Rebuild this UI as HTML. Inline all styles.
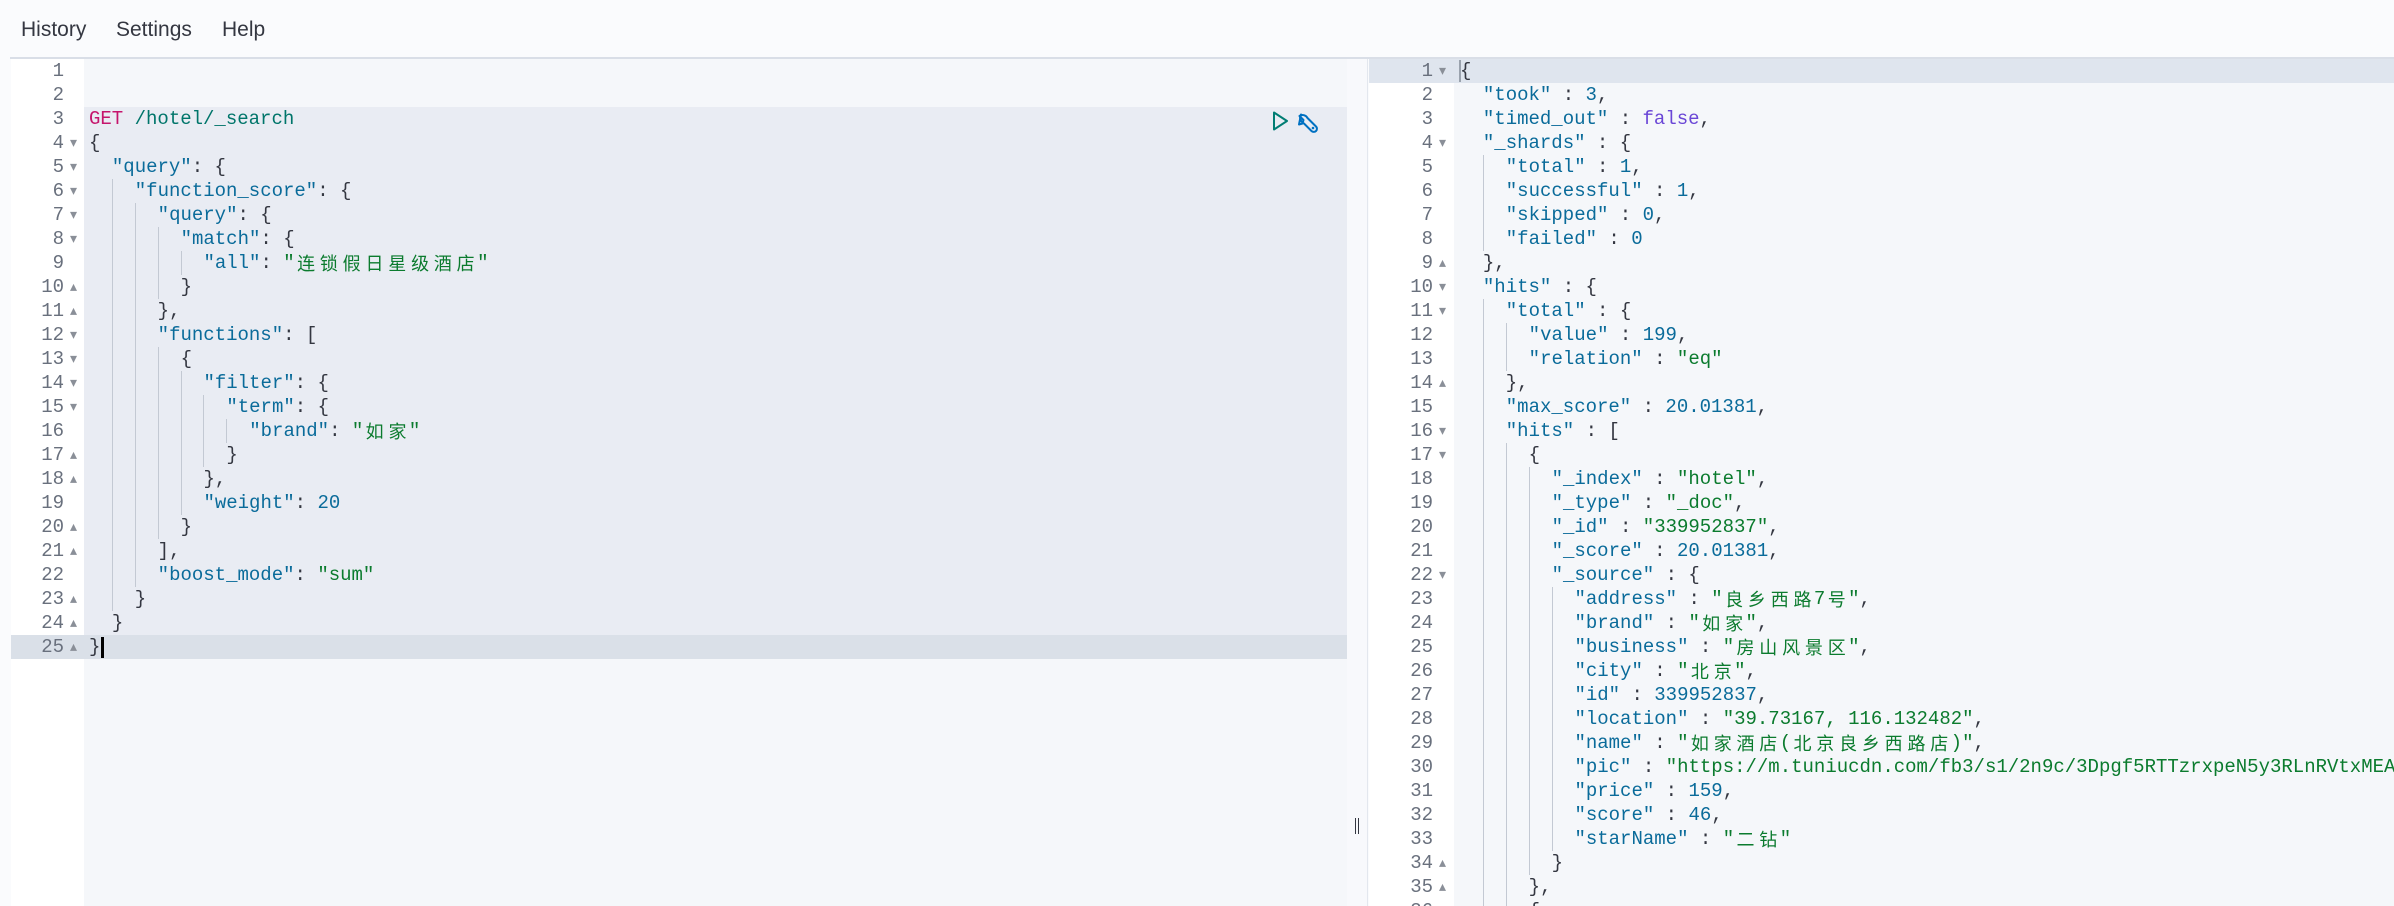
<!DOCTYPE html>
<html><head><meta charset="utf-8">
<style>
*{margin:0;padding:0;box-sizing:border-box}
body{width:2394px;height:906px;overflow:hidden;background:#fafbfd;font-family:"Liberation Sans",sans-serif;position:relative}
.menu{position:absolute;top:18px;font-size:21px;color:#343741}
.topline{position:absolute;left:10px;right:0;top:57px;height:2px;background:#d9dee7}
.pane{position:absolute;top:59px;bottom:0;overflow:hidden;font-family:"Liberation Mono","Noto Sans CJK SC",monospace;font-size:19px}
.gut{position:absolute;top:0;bottom:0;background:#fff}
.txt{position:absolute;top:0;bottom:0;background:#f5f7fa}
.ln{position:absolute;height:24px;line-height:24px;color:#69707d;text-align:right}
.fold{position:absolute;font-size:14px;color:#8a8f98;line-height:24px;height:24px;font-family:"DejaVu Sans",sans-serif}
.row{position:absolute;height:24px;line-height:24px;white-space:pre;color:#343741;overflow:hidden}
.g{display:inline-block;width:22.9px;height:24px;vertical-align:top}
.g.b{border-left:1px solid #c3c9d3}
.k{color:#0a6b9a}.s{color:#0b7b2e}.n{color:#0a6b9a}.b2{color:#6a46d6}
.cj{display:inline-block;width:22.8px;height:24px;line-height:24px;vertical-align:top;text-align:center;font-family:"Noto Sans CJK SC",sans-serif;font-size:18px;overflow:hidden}
</style></head><body>
<div class="menu" style="left:21px">History</div>
<div class="menu" style="left:116px">Settings</div>
<div class="menu" style="left:222px">Help</div>
<div class="topline"></div>

<div class="pane" id="L" style="left:11px;width:1336px">
 <div class="gut" style="left:0;width:73px"></div>
 <div class="txt" style="left:73px;right:0"></div>
 <div style="position:absolute;left:73px;right:0;top:48px;height:528px;background:#e9ecf3"></div>
 <div style="position:absolute;left:0;right:0;top:576px;height:24px;background:#dae0e8"></div>
 <div style="position:absolute;left:90px;top:578px;width:3px;height:21px;background:#000"></div>
 <svg style="position:absolute;left:1260px;top:51px" width="70" height="24" viewBox="0 0 70 24">
  <path d="M3 2.5 L16 11 L3 19.5 Z" fill="none" stroke="#017d73" stroke-width="2" stroke-linejoin="round"/>
  <path d="M30 4.5 a5.5 5.5 0 0 0 2 8 l8.5 8.5 a3 3 0 0 0 4.5 -4.5 l-8.5 -8.5 a5.5 5.5 0 0 0 -8 -2 l4 4 -1 3.5 -3.5 1 z" fill="none" stroke="#0071c2" stroke-width="2" stroke-linejoin="round"/>
  <circle cx="42" cy="18" r="1.3" fill="#0071c2"/>
 </svg>
</div>

<div style="position:absolute;left:1347px;top:59px;width:21px;bottom:0;background:#f8f9fc;border-right:1px solid #e3e7ee"></div>
<div style="position:absolute;left:1355px;top:818px;width:1px;height:16px;background:#343741"></div>
<div style="position:absolute;left:1358px;top:818px;width:1px;height:16px;background:#343741"></div>

<div class="pane" id="R" style="left:1369px;right:0">
 <div class="gut" style="left:0;width:85px"></div>
 <div class="txt" style="left:85px;right:0"></div>
 <div style="position:absolute;left:0;right:0;top:0;height:24px;background:#dfe5ee"></div>
 <div style="position:absolute;left:90px;top:1px;width:2px;height:22px;background:#9aa2ad"></div>
</div>

<script>
var left=[
"","","GET /hotel/_search","{",
'  "query": {','    "function_score": {','      "query": {','        "match": {','          "all": "连锁假日星级酒店"','        }','      },',
'      "functions": [','        {','          "filter": {','            "term": {','              "brand": "如家"','            }','          },','          "weight": 20','        }','      ],','      "boost_mode": "sum"','    }','  }','}'];
var lf={4:"▾",5:"▾",6:"▾",7:"▾",8:"▾",10:"▴",11:"▴",12:"▾",13:"▾",14:"▾",15:"▾",17:"▴",18:"▴",20:"▴",21:"▴",23:"▴",24:"▴",25:"▴"};
var right=['{','  "took" : 3,','  "timed_out" : false,','  "_shards" : {','    "total" : 1,','    "successful" : 1,','    "skipped" : 0,','    "failed" : 0','  },',
'  "hits" : {','    "total" : {','      "value" : 199,','      "relation" : "eq"','    },','    "max_score" : 20.01381,','    "hits" : [','      {',
'        "_index" : "hotel",','        "_type" : "_doc",','        "_id" : "339952837",','        "_score" : 20.01381,','        "_source" : {',
'          "address" : "良乡西路7号",','          "brand" : "如家",','          "business" : "房山风景区",','          "city" : "北京",','          "id" : 339952837,',
'          "location" : "39.73167, 116.132482",','          "name" : "如家酒店(北京良乡西路店)",','          "pic" : "https://m.tuniucdn.com/fb3/s1/2n9c/3Dpgf5RTTzrxpeN5y3RLnRVtxMEA_w200_h200_c1_t0.jpg",',
'          "price" : 159,','          "score" : 46,','          "starName" : "二钻"','        }','      },','      {'];
var rf={1:"▾",4:"▾",9:"▴",10:"▾",11:"▾",14:"▴",16:"▾",17:"▾",22:"▾",34:"▴",35:"▴"};
function esc(s){return s.replace(/&/g,"&amp;").replace(/</g,"&lt;")}
function cj(s){return esc(s).replace(/([\u3000-\u9fff\uff00-\uffef])/g,'<span class="cj">$1</span>')}
function tok(t){
 if(t.indexOf("GET")==0)return '<span style="color:#c5156c">GET</span><span style="color:#00756a">'+t.slice(3)+'</span>';
 var out="",re=/("(?:[^"\\]|\\.)*")(\s*:)?|(-?\d+(?:\.\d+)?)|(true|false|null)|([^"\d]+?)/g,m;
 while(m=re.exec(t)){
  if(m[1]){out+= m[2]!==undefined? '<span class="k">'+cj(m[1])+'</span>'+m[2] : '<span class="s">'+cj(m[1])+'</span>';}
  else if(m[3])out+='<span class="n">'+m[3]+'</span>';
  else if(m[4])out+='<span class="b2">'+m[4]+'</span>';
  else out+=esc(m[5]);
 }
 return out;
}
function build(id,lines,folds,numR,foldX,txtX){
 var p=document.getElementById(id),h="";
 lines.forEach(function(l,i){
  var y=i*24,n=i+1;
  h+='<div class="ln" style="top:'+y+'px;left:0;width:'+numR+'px">'+n+'</div>';
  if(folds[n])h+='<div class="fold" style="top:'+y+'px;left:'+foldX+'px">'+folds[n]+'</div>';
  var ind=l.match(/^ */)[0].length,g="";
  for(var k=0;k<ind/2;k++)g+='<span class="g'+(k>=1?' b':'')+'"></span>';
  h+='<div class="row" style="top:'+y+'px;left:'+txtX+'px">'+g+tok(l.slice(ind))+'</div>';
 });
 p.insertAdjacentHTML("beforeend",h);
}
build("L",left,lf,53,59,78);
build("R",right,rf,64,70,91);
</script>
</body></html>
